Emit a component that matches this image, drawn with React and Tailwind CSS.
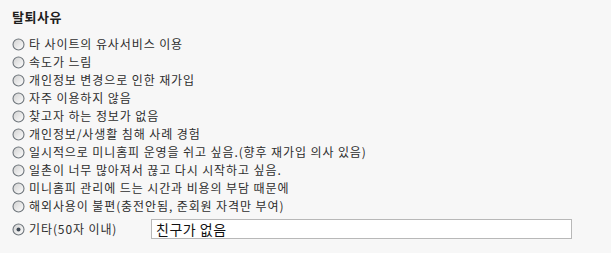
import React, { useState } from 'react';

const reasons = [
  '타 사이트의 유사서비스 이용',
  '속도가 느림',
  '개인정보 변경으로 인한 재가입',
  '자주 이용하지 않음',
  '찾고자 하는 정보가 없음',
  '개인정보/사생활 침해 사례 경험',
  '일시적으로 미니홈피 운영을 쉬고 싶음.(향후 재가입 의사 있음)',
  '일촌이 너무 많아져서 끊고 다시 시작하고 싶음.',
  '미니홈피 관리에 드는 시간과 비용의 부담 때문에',
  '해외사용이 불편(충전안됨, 준회원 자격만 부여)',
];

// 예전 윈도우 스타일 라디오 버튼
const Radio = ({ checked }) => (
  <svg width="13" height="13" viewBox="0 0 13 13" className="shrink-0">
    <defs>
      <linearGradient id="rg" x1="0" y1="0" x2="1" y2="1">
        <stop offset="0" stopColor="#d0d0d0" />
        <stop offset="1" stopColor="#ffffff" />
      </linearGradient>
    </defs>
    <circle cx="6.5" cy="6.5" r="5.5" fill="url(#rg)" stroke="#6f767c" strokeWidth="1.1" />
    {checked && <circle cx="6.5" cy="6.5" r="2" fill="#3f4a55" />}
  </svg>
);

export default function App() {
  const [selected, setSelected] = useState(reasons.length);
  const [etc, setEtc] = useState('친구가 없음');

  return (
    <div
      className="w-[611px] h-[253px] bg-[#f7f7f7] text-[#2e2e2e] pl-[12px] pt-[10px]"
      style={{ fontFamily: '"Noto Sans CJK KR", "Noto Sans", sans-serif' }}
    >
      <h2 className="text-[13px] font-bold leading-[14px] h-[14px] tracking-[0.5px] text-[#1e1e1e]">탈퇴사유</h2>

      <ul className="mt-[11px]">
        {reasons.map((r, i) => (
          <li
            key={r}
            className="h-[18px] flex items-center gap-[4px] text-[12px] leading-[18px] tracking-[0.9px] cursor-pointer"
            onClick={() => setSelected(i)}
          >
            <Radio checked={selected === i} />
            <span>{r}</span>
          </li>
        ))}
        <li className="mt-[4px] h-[20px] flex items-center text-[12px] tracking-[0.9px]">
          <div
            className="w-[139px] flex items-center gap-[4px] cursor-pointer"
            onClick={() => setSelected(reasons.length)}
          >
            <Radio checked={selected === reasons.length} />
            <span>기타(50자 이내)</span>
          </div>
          <input
            value={etc}
            onChange={(e) => setEtc(e.target.value)}
            className="w-[421px] h-[20px] bg-white border border-[#b8b8b8] px-[4px] text-[14px] tracking-[0.5px] text-[#111] outline-none"
          />
        </li>
      </ul>
    </div>
  );
}
